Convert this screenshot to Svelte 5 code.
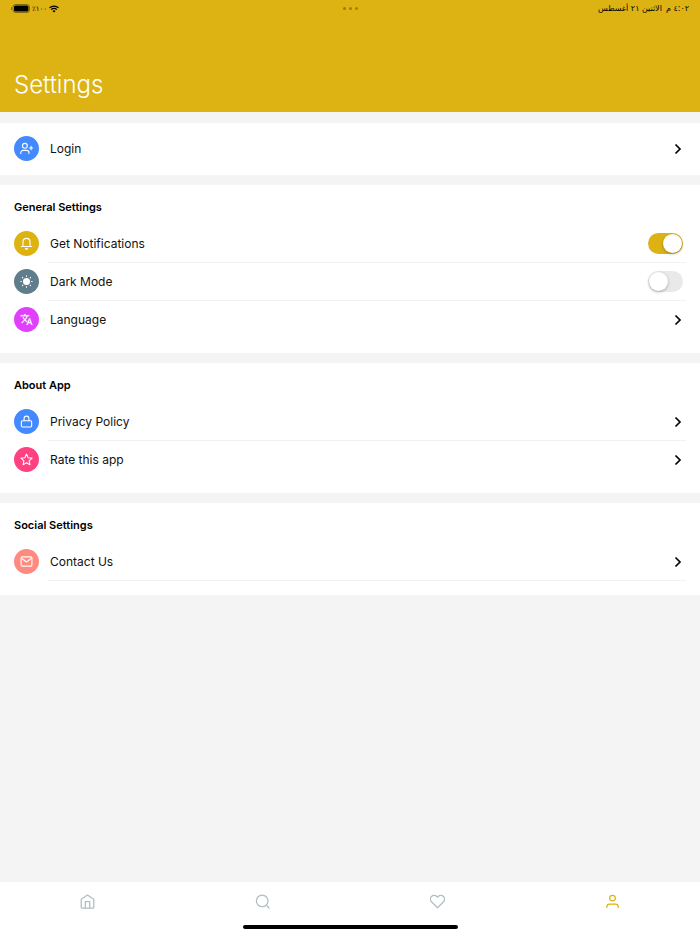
<script lang="ts">
  type IconName = 'login' | 'bell' | 'sun' | 'language' | 'lock' | 'star' | 'mail';

  interface Item {
    id: string;
    label: string;
    icon: IconName;
    tone: string;
    toggle?: boolean;
    divider?: boolean;
  }

  interface Section {
    title: string;
    items: Item[];
  }

  let notifications = $state(true);
  let darkMode = $state(false);
  let activeTab = $state('profile');

  const sections: Section[] = [
    {
      title: 'General Settings',
      items: [
        { id: 'notifications', label: 'Get Notifications', icon: 'bell', tone: 'gold', toggle: true, divider: true },
        { id: 'dark-mode', label: 'Dark Mode', icon: 'sun', tone: 'slate', toggle: true, divider: true },
        { id: 'language', label: 'Language', icon: 'language', tone: 'purple' },
      ],
    },
    {
      title: 'About App',
      items: [
        { id: 'privacy', label: 'Privacy Policy', icon: 'lock', tone: 'blue', divider: true },
        { id: 'rate', label: 'Rate this app', icon: 'star', tone: 'pink' },
      ],
    },
    {
      title: 'Social Settings',
      items: [
        { id: 'contact', label: 'Contact Us', icon: 'mail', tone: 'coral', divider: true },
      ],
    },
  ];

  const tabs = [
    { id: 'home', label: 'Home' },
    { id: 'search', label: 'Search' },
    { id: 'favorites', label: 'Favorites' },
    { id: 'profile', label: 'Profile' },
  ];

  function isOn(id: string) {
    return id === 'notifications' ? notifications : darkMode;
  }

  function toggle(id: string) {
    if (id === 'notifications') notifications = !notifications;
    else darkMode = !darkMode;
  }
</script>

{#snippet badge(name: IconName, tone: string)}
  <span class="badge {tone}">
    <svg width="13" height="13" viewBox="0 0 24 24" fill="none" stroke="currentColor" stroke-width="2" stroke-linecap="round" stroke-linejoin="round" aria-hidden="true">
      {#if name === 'login'}
        <circle cx="9" cy="7" r="4.500" />
        <path d="M1.500 21v-1.500a4 4 0 0 1 4-4h7a4 4 0 0 1 4 4V21M20.500 8v6M17.500 11h6" />
      {:else if name === 'bell'}
        <path d="M2.500 17.500h19M5.500 17.500V9a6.500 6.500 0 0 1 13 0v8.500" />
        <path d="M10 21.500h4l-2 1z" fill="currentColor" />
      {:else if name === 'sun'}
        <circle cx="12" cy="12" r="5.500" fill="currentColor" />
        <path d="M12 1.500v1M12 21.500v1M1.500 12h1M21.500 12h1M4.500 4.500l.7.7M18.800 18.800l.7.7M4.500 19.500l.7-.7M18.800 5.200l.7-.7" />
      {:else if name === 'language'}
        <path fill="currentColor" stroke="currentColor" stroke-width="0.500" d="M12.870 15.070l-2.540-2.510.030-.030A17.520 17.520 0 0 0 14.070 6H17V4h-7V2H8v2H1v2h11.170C11.500 7.920 10.440 9.750 9 11.350 8.070 10.320 7.300 9.190 6.690 8h-2c.730 1.630 1.730 3.170 2.980 4.560l-5.090 5.020L4 19l5-5 3.110 3.110.760-2.040zM18.500 10h-2L12 22h2l1.120-3h4.750L21 22h2l-4.500-12zm-2.620 7l1.620-4.330L19.120 17h-3.240z" />
      {:else if name === 'lock'}
        <rect x="2.500" y="10.500" width="19" height="11.500" rx="2" />
        <path d="M7.500 10.500V6.500a4.500 4.500 0 0 1 9 0v4" />
      {:else if name === 'star'}
        <path d="M12 2l3 6.700 7.200.8-5.400 4.900 1.500 7.200L12 18l-6.300 3.600 1.500-7.200L1.800 9.500 9 8.700z" />
      {:else}
        <rect x="2" y="3.500" width="20" height="17" rx="2" />
        <path d="M4 7l8 6 8-6" />
      {/if}
    </svg>
  </span>
{/snippet}

{#snippet chevron()}
  <svg class="chevron" width="12" height="12" viewBox="0 0 12 12" fill="none" stroke="currentColor" stroke-width="1.700" aria-hidden="true">
    <path d="M4.500 1.500L9 6l-4.500 4.500" />
  </svg>
{/snippet}

<div class="app">
  <header class="header">
    <div class="status">
      <div class="status-side">
        <svg width="19" height="9" viewBox="0 0 19 9" aria-hidden="true">
          <rect x="2" y="0.500" width="16.500" height="8" rx="2.500" fill="none" stroke="#000" stroke-opacity="0.4" />
          <rect x="3" y="1.500" width="14.500" height="6" rx="1.500" />
          <path d="M1 3v3a1.500 1.500 0 0 1 0-3z" fill-opacity="0.4" />
        </svg>
        <span class="percent" lang="ar">٪١٠٠</span>
        <svg width="10" height="8" viewBox="0 0 20 16" fill="none" stroke="#000" stroke-width="2.600" aria-hidden="true">
          <path d="M1 5.800a13 13 0 0 1 18 0M4.300 9.300a8.200 8.200 0 0 1 11.400 0" />
          <path d="M10 15l-3-3.200a4.200 4.200 0 0 1 6 0z" fill="#000" stroke="none" />
        </svg>
      </div>
      <div class="dots" aria-hidden="true"><i></i><i></i><i></i></div>
      <div class="status-side clock" dir="rtl" lang="ar">
        <span>٤:٠٢ م</span>
        <span>الاثنين ٢١ أغسطس</span>
      </div>
    </div>
    <h1>Settings</h1>
  </header>

  <main>
    <section class="card login">
      <button class="row">
        {@render badge('login', 'blue')}
        <span class="content">
          <span class="label">Login</span>
          {@render chevron()}
        </span>
      </button>
    </section>

    {#each sections as section (section.title)}
      <section class="card">
        <h2>{section.title}</h2>
        {#each section.items as item (item.id)}
          {#if item.toggle}
            <label class="row">
              {@render badge(item.icon, item.tone)}
              <span class="content" class:divider={item.divider}>
                <span class="label">{item.label}</span>
                <input class="switch" type="checkbox" role="switch" checked={isOn(item.id)} onchange={() => toggle(item.id)} />
              </span>
            </label>
          {:else}
            <button class="row">
              {@render badge(item.icon, item.tone)}
              <span class="content" class:divider={item.divider}>
                <span class="label">{item.label}</span>
                {@render chevron()}
              </span>
            </button>
          {/if}
        {/each}
      </section>
    {/each}
  </main>

  <nav class="tabbar" aria-label="Main">
    <div class="tabs">
      {#each tabs as tab (tab.id)}
        <button class="tab" class:active={activeTab === tab.id} aria-label={tab.label} onclick={() => (activeTab = tab.id)}>
          <svg width="15" height="15" viewBox="0 0 24 24" fill="none" stroke="currentColor" stroke-width="2" stroke-linecap="round" stroke-linejoin="round">
            {#if tab.id === 'home'}
              <path d="M2 8.500L12 1.500l10 7V21a1.500 1.500 0 0 1-1.500 1.500h-17A1.500 1.500 0 0 1 2 21z" />
              <path d="M8.500 22V12h7v10" />
            {:else if tab.id === 'search'}
              <circle cx="11.500" cy="11" r="9.300" />
              <path d="M22.500 22.500l-4-4.500" />
            {:else if tab.id === 'favorites'}
              <path d="M21.600 3.900a6 6 0 0 0-8.500 0L12 5l-1.100-1.100a6 6 0 0 0-8.500 8.500L12 22l9.600-9.600a6 6 0 0 0 0-8.500z" />
            {:else}
              <circle cx="12" cy="6.500" r="4.500" />
              <path d="M3 21.500V20a4 4 0 0 1 4-4h10a4 4 0 0 1 4 4v1.500" />
            {/if}
          </svg>
        </button>
      {/each}
    </div>
    <div class="home-indicator"></div>
  </nav>
</div>

<style>
  :global(body) {
    margin: 0;
    background: #f4f4f4;
  }

  .app {
    --gold: #dcb312;
    display: flex;
    flex-direction: column;
    min-height: 100vh;
    background: #f4f4f4;
    color: #111;
    font-family: Inter, 'Open Sans', sans-serif;
    font-size: 12px;
  }

  .header {
    display: flex;
    flex-direction: column;
    gap: 52px;
    padding-bottom: 11px;
    background: var(--gold);
  }

  .status {
    display: grid;
    grid-template-columns: 1fr auto 1fr;
    align-items: center;
    height: 17px;
    padding: 0 11px;
    color: #000;
    font-family: 'DejaVu Sans', 'Noto Sans', sans-serif;
    font-size: 8px;
    line-height: 12px;
  }

  .status-side {
    display: flex;
    align-items: center;
    gap: 2px;
  }

  .percent {
    font-size: 7px;
  }

  .clock {
    gap: 4px;
  }

  .dots {
    display: flex;
    gap: 3px;
  }

  .dots i {
    width: 3px;
    height: 3px;
    border-radius: 50%;
    background: #a47c0b;
  }

  h1 {
    margin: 0;
    padding: 0 14px;
    color: #fff;
    font-size: 24px;
    font-weight: 300;
    line-height: 32px;
  }

  main {
    flex: 1;
    display: flex;
    flex-direction: column;
    gap: 10px;
    padding: 11px 0;
  }

  .card {
    padding: 0 14px 14px;
    background: #fff;
  }

  .card.login {
    padding: 7px 14px;
  }

  h2 {
    margin: 0;
    padding: 12px 0 8px;
    color: #000;
    font-size: 11px;
    font-weight: 600;
    line-height: 20px;
  }

  .row {
    display: flex;
    align-items: stretch;
    gap: 9px;
    width: 100%;
    height: 38px;
    padding: 0;
    border: none;
    background: transparent;
    color: inherit;
    font: inherit;
    text-align: left;
    cursor: pointer;
  }

  .badge {
    flex-shrink: 0;
    align-self: center;
    display: grid;
    place-items: center;
    width: 25px;
    height: 25px;
    margin-bottom: 1px;
    border-radius: 50%;
    color: #fff;
  }

  .blue { background: #448aff; }
  .gold { background: var(--gold); }
  .slate { background: #607d8b; }
  .purple { background: #e040fb; }
  .pink { background: #ff4081; }
  .coral { background: #ff8a80; }

  .content {
    flex: 1;
    display: flex;
    align-items: center;
    justify-content: space-between;
    padding: 0 3px 0 2px;
    border-bottom: 1px solid transparent;
  }

  .content.divider {
    border-bottom-color: #f2f2f2;
  }

  .label {
    line-height: 16px;
  }

  .chevron {
    margin-top: 1px;
    color: #000;
  }

  .switch {
    appearance: none;
    width: 35px;
    height: 21px;
    margin: 0;
    border-radius: 11px;
    background: #e9e9e9;
    cursor: pointer;
  }

  .switch::before {
    content: '';
    display: block;
    width: 19px;
    height: 19px;
    margin: 1px;
    border-radius: 50%;
    background: #fff;
    box-shadow: 0 1px 3px rgba(0, 0, 0, 0.3);
  }

  .switch:checked {
    background: var(--gold);
  }

  .switch:checked::before {
    margin-left: 15px;
  }

  .tabbar {
    display: flex;
    flex-direction: column;
    align-items: center;
    padding-bottom: 5px;
    background: #fff;
  }

  .tabs {
    display: grid;
    grid-template-columns: repeat(4, 1fr);
    width: 100%;
  }

  .tab {
    display: grid;
    place-items: center;
    height: 39px;
    padding: 0;
    border: none;
    background: transparent;
    color: #b0bec5;
    cursor: pointer;
  }

  .tab.active {
    color: var(--gold);
  }

  .home-indicator {
    width: 215px;
    height: 4px;
    margin-top: 4px;
    border-radius: 2px;
    background: #000;
  }
</style>
